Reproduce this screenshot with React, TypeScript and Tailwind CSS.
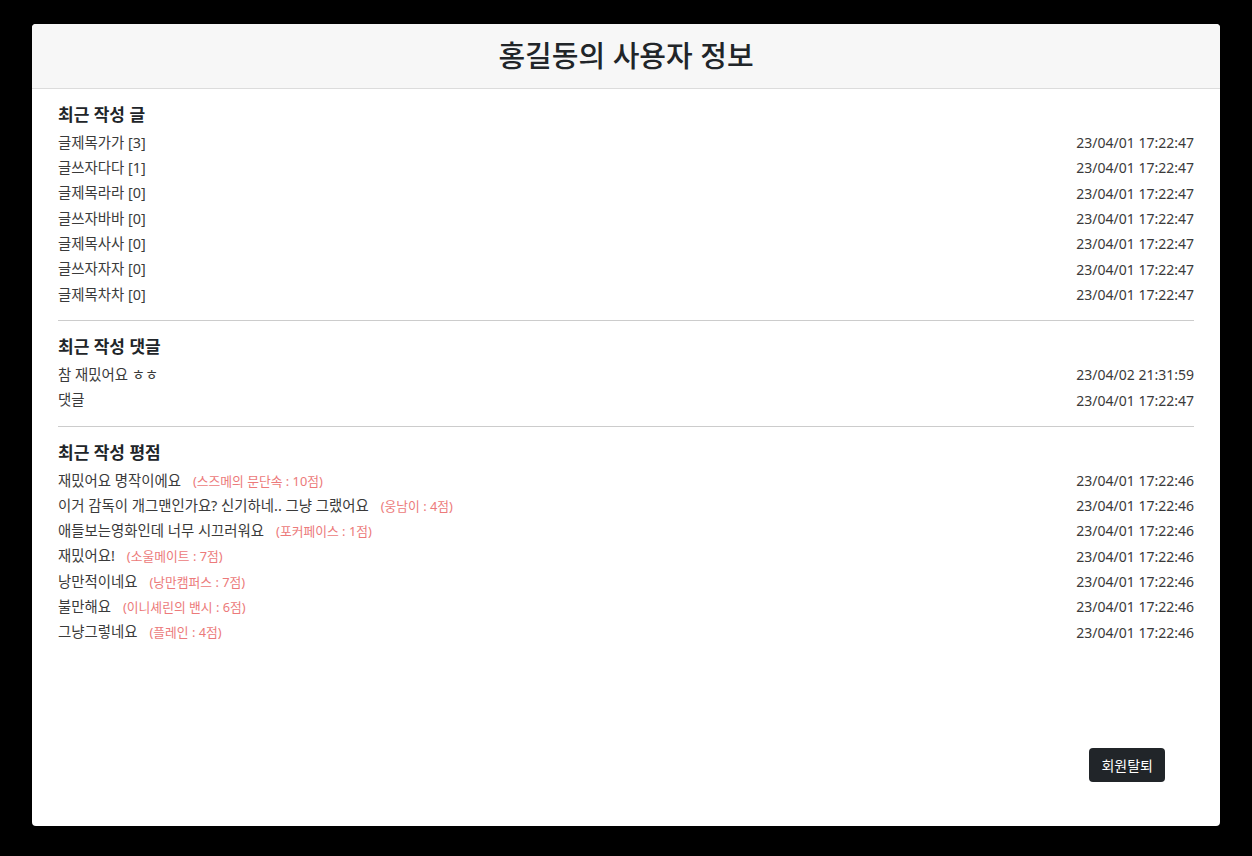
import React from 'react';

const kr = { fontFamily: '"Noto Sans", "Noto Sans CJK KR", sans-serif' };

const posts = [
  { title: '글제목가가', count: 3 },
  { title: '글쓰자다다', count: 1 },
  { title: '글제목라라', count: 0 },
  { title: '글쓰자바바', count: 0 },
  { title: '글제목사사', count: 0 },
  { title: '글쓰자자자', count: 0 },
  { title: '글제목차차', count: 0 },
];

const comments = [
  { text: '참 재밌어요 ㅎㅎ', date: '23/04/02 21:31:59' },
  { text: '댓글', date: '23/04/01 17:22:47' },
];

const ratings = [
  { text: '재밌어요 명작이에요', movie: '스즈메의 문단속', score: 10 },
  { text: '이거 감독이 개그맨인가요? 신기하네.. 그냥 그랬어요', movie: '웅남이', score: 4 },
  { text: '애들보는영화인데 너무 시끄러워요', movie: '포커페이스', score: 1 },
  { text: '재밌어요!', movie: '소울메이트', score: 7 },
  { text: '낭만적이네요', movie: '낭만캠퍼스', score: 7 },
  { text: '불만해요', movie: '이니셰린의 밴시', score: 6 },
  { text: '그냥그렇네요', movie: '플레인', score: 4 },
];

const Row: React.FC<{ date: string; children: React.ReactNode }> = ({ date, children }) => (
  <div className="flex items-center justify-between h-[25.3px] text-[#3a3a3a]">
    <div className="flex items-baseline text-[14.4px]">{children}</div>
    <span className="text-[14px]">{date}</span>
  </div>
);

const Section: React.FC<{ title: string; last?: boolean; children: React.ReactNode }> = ({ title, last, children }) => (
  <section className={`pt-[14px] pb-[13px] ${last ? '' : 'border-b border-[#ccc]'}`}>
    <h3 className="text-[17px] font-bold text-[#212529] leading-[24px] mb-[3px]">{title}</h3>
    {children}
  </section>
);

const App: React.FC = () => {
  return (
    <div className="min-h-screen w-full bg-black pt-[24px] pb-[30px] px-[32px]" style={kr}>
      <div className="bg-white rounded-[4px] overflow-hidden h-[802px] flex flex-col">
        <div className="h-[65px] bg-[#f7f7f7] border-b border-[#dcdcdc] flex items-center justify-center">
          <h1 className="text-[29px] font-medium text-[#212529]">홍길동의 사용자 정보</h1>
        </div>

        <div className="flex-1 flex flex-col px-[26px]">
          <Section title="최근 작성 글">
            {posts.map((p, i) => (
              <Row key={i} date="23/04/01 17:22:47">
                {p.title} [{p.count}]
              </Row>
            ))}
          </Section>

          <Section title="최근 작성 댓글">
            {comments.map((c, i) => (
              <Row key={i} date={c.date}>
                {c.text}
              </Row>
            ))}
          </Section>

          <Section title="최근 작성 평점" last>
            {ratings.map((r, i) => (
              <Row key={i} date="23/04/01 17:22:46">
                <span>{r.text}</span>
                <span className="ml-[12px] text-[12.8px] text-[#ec7a7a]">
                  ({r.movie} : {r.score}점)
                </span>
              </Row>
            ))}
          </Section>

          <div className="mt-auto flex justify-end pr-[29px] pb-[44px]">
            <button className="bg-[#212529] text-white text-[14px] rounded-[4px] h-[34px] px-[12px]">
              회원탈퇴
            </button>
          </div>
        </div>
      </div>
    </div>
  );
};

export default App;
